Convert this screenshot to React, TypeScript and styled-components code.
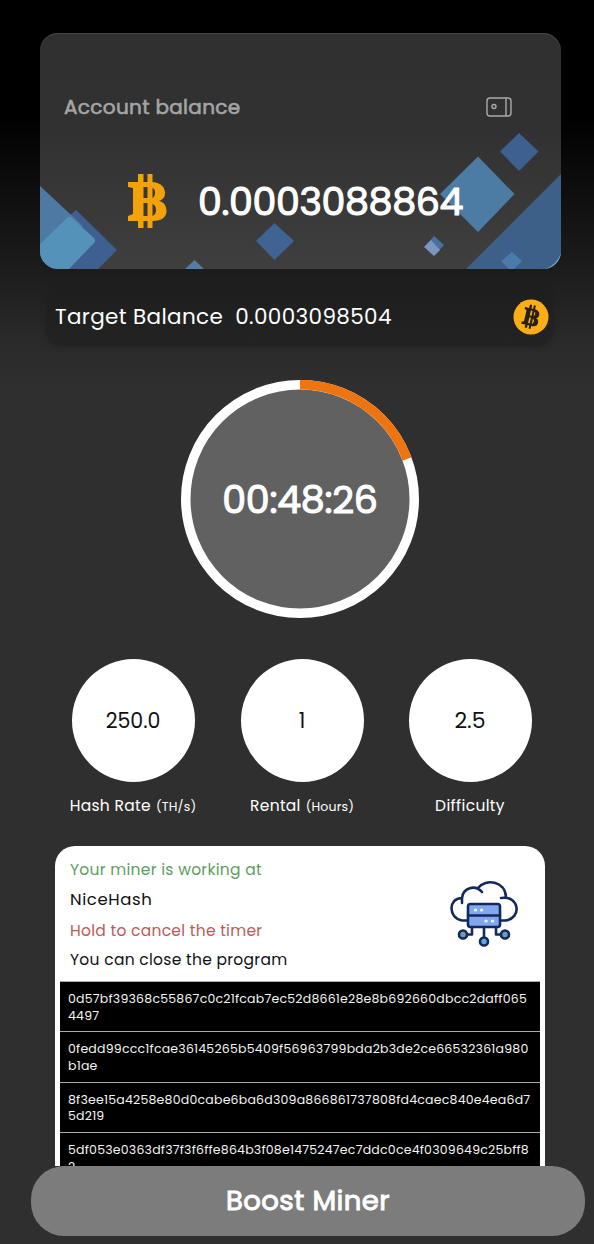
import React from 'react';
import styled, { createGlobalStyle } from 'styled-components';

const GlobalStyle = createGlobalStyle`
  * { box-sizing: border-box; }
  body {
    margin: 0;
    background: #2f2f2f;
    font-family: Poppins, Inter, sans-serif;
  }
`;

const Screen = styled.main`
  width: 594px;
  height: 1244px;
  overflow: hidden;
  display: flex;
  flex-direction: column;
  background: linear-gradient(#000 0, #000 115px, #0e0e0e 190px, #1c1c1c 270px, #292929 335px, #2f2f2f 385px);
`;

const Label = styled.span<{ $size: number; $spacing?: number; $stroke?: number; $color?: string; $shift?: number }>`
  font-size: ${p => p.$size}px;
  line-height: 1;
  letter-spacing: ${p => p.$spacing ?? 0}px;
  -webkit-text-stroke: ${p => p.$stroke ?? 0}px;
  color: ${p => p.$color ?? '#fff'};
  white-space: nowrap;
  margin-left: ${p => p.$shift ?? 0}px;
`;

const BalanceCard = styled.section`
  position: relative;
  flex: none;
  width: 521px;
  height: 236px;
  margin: 33px 0 0 40px;
  border-radius: 18px;
  overflow: hidden;
  background: linear-gradient(#303030, #313131 40%, #3f3f3f);
  box-shadow: inset 0 1px 0 #454545;
`;

const CardArt = styled.svg`
  position: absolute;
  inset: 0;
`;

const CardContent = styled.div`
  position: relative;
`;

const CardHeader = styled.div`
  display: flex;
  align-items: center;
  justify-content: space-between;
  padding: 64px 49px 0 24px;
`;

const Amount = styled.div`
  display: flex;
  align-items: center;
  gap: 31px;
  padding: 57px 0 0 88px;
  span { padding-top: 1px; }
`;

const TargetBar = styled.section`
  flex: none;
  display: flex;
  align-items: center;
  width: 507px;
  height: 59px;
  margin: 18px 0 0 46px;
  padding: 0 4px 0 8px;
  border-radius: 16px;
  background: linear-gradient(#1e1e1e, #232323);
  box-shadow: 0 0 5px #1f1f1f;
  svg { margin-left: auto; }
`;

const Dial = styled.section`
  position: relative;
  flex: none;
  width: 238px;
  height: 238px;
  margin: 34px 0 0 181px;
  padding-top: 2px;
  display: grid;
  place-items: center;
  svg { position: absolute; inset: 0; }
  span { position: relative; }
`;

const Stats = styled.section`
  flex: none;
  display: grid;
  grid-template-columns: 170px 168px 168px;
  margin: 41px 0 0 48px;
`;

const Stat = styled.div`
  display: flex;
  flex-direction: column;
  align-items: center;
`;

const Disc = styled.div`
  width: 123px;
  height: 123px;
  border-radius: 50%;
  background: #fff;
  display: grid;
  place-items: center;
  padding-top: 1px;
`;

const Caption = styled.div`
  display: flex;
  align-items: baseline;
  gap: 5px;
  height: 20px;
  margin-top: 16px;
`;

const MinerPanel = styled.section`
  flex: none;
  width: 490px;
  height: 320px;
  margin: 28px 0 0 55px;
  padding: 0 5px;
  border-radius: 20px 20px 0 0;
  background: #fff;
  overflow: hidden;
`;

const PanelTop = styled.div`
  display: flex;
  justify-content: space-between;
  height: 135px;
  padding: 9px 20px 0 10px;
  svg { margin-top: 22px; }
`;

const Messages = styled.div`
  display: flex;
  flex-direction: column;
  span { line-height: 30px; height: 30px; }
  span:nth-child(3) { padding-top: 1px; }
`;

const HashRow = styled.div`
  height: 50.4px;
  padding: 9px 8px 0;
  border-top: 1.5px solid #aaa;
  background: #000;
  color: #f4f4f4;
  font-size: 12.5px;
  line-height: 16.5px;
`;

const HashLine = styled.div`
  letter-spacing: 0.22px;
  white-space: nowrap;
`;

const BoostButton = styled.button`
  flex: none;
  width: 554px;
  height: 70px;
  margin-left: 31px;
  padding: 0;
  border: 0;
  border-radius: 33px;
  background: #7c7c7c;
  font-family: inherit;
`;

const Coin = ({ fill }: { fill: string }) => (
  <path
    fill={fill}
    fillRule="evenodd"
    d="M0 8H10V0H15.500V8H19.500V0H24.500V8C34 9 37 14 37 19C37 24 34 26 31 27C36 28 38.500 32 38.500 37C38.500 43 34 47 24.500 47V54H19.500V47H15.500V54H10V47H0V42L5 40V14L0 13ZM15.500 13V24H19.500V13ZM24.500 14V24C26.500 23 27 21 27 18.500C27 16 26.500 15 24.500 14ZM15.500 29V42H19.500V29ZM24.500 30V42C27 41 28 39 28 36C28 33 27 31 24.500 30Z"
  />
);

const hashes: [string, string][] = [
  ['0d57bf39368c55867c0c21fcab7ec52d8661e28e8b692660dbcc2daff065', '4497'],
  ['0fedd99ccc1fcae36145265b5409f56963799bda2b3de2ce66532361a980', 'b1ae'],
  ['8f3ee15a4258e80d0cabe6ba6d309a866861737808fd4caec840e4ea6d7', '5d219'],
  ['5df053e0363df37f3f6ffe864b3f08e1475247ec7ddc0ce4f0309649c25bff8', '2'],
];

export default function App() {
  return (
    <Screen>
      <GlobalStyle />
      <BalanceCard>
        <CardArt width="521" height="236" viewBox="40 33 521 236">
          <path d="M76 210L117 250L98 269H65L40 240Z" fill="#3d6090" />
          <path d="M40 186L83 226L40 266Z" fill="#4d79a3" />
          <path d="M66 219Q69 215 72 218L94 238Q96 241 94 243L69 269H40V244Z" fill="#5592ba" />
          <path d="M274.500 223L294 241L274.500 260L256 241Z" fill="#3f6392" />
          <path d="M194.500 260L204 269H185Z" fill="#547da3" />
          <path d="M519 133L538.500 151.500L519 171L500 151.500Z" fill="#3d6090" />
          <path d="M478 156.500L514.500 194L478 232L440 194Z" fill="#4c7ba4" />
          <path d="M561 174V269H466Z" fill="#3d6089" />
          <path d="M512 252L522 261L514 269H509L501 261Z" fill="#4a7cab" />
          <path d="M434 236L444 245L437 253L427 244Z" fill="#486f9f" />
          <path d="M431 240L440 250L434 256L424 247Z" fill="#7c97bd" />
          <path d="M561 253Q557 265 545 269H561Z" fill="#7fa9c2" />
        </CardArt>
        <CardContent>
          <CardHeader>
            <Label $size={20} $stroke={0.6} $spacing={0.33} $color="#a5a5a5">Account balance</Label>
            <svg width="26" height="20" viewBox="0 0 26 20" fill="none" stroke="#aaa" strokeWidth="1.400">
              <rect x="1" y="1" width="24" height="18" rx="3" />
              <path d="M20 1V19" />
              <circle cx="8" cy="9.500" r="2" />
            </svg>
          </CardHeader>
          <Amount>
            <svg width="39" height="54" viewBox="0 0 39 54"><Coin fill="#f3a20c" /></svg>
            <Label $size={38} $stroke={1.1} $spacing={-0.38}>0.0003088864</Label>
          </Amount>
        </CardContent>
      </BalanceCard>

      <TargetBar>
        <Label $size={21.5} $spacing={0.35} $shift={1}>Target Balance</Label>
        <Label $size={21.5} $spacing={0.36} $shift={12}>0.0003098504</Label>
        <svg width="36" height="36" viewBox="0 0 36 36">
          <circle cx="18" cy="18" r="17.500" fill="#fbad18" />
          <g transform="rotate(13 18 18) translate(10 6) scale(.42 .44)"><Coin fill="#2a2010" /></g>
        </svg>
      </TargetBar>

      <Dial>
        <svg width="238" height="238" viewBox="0 0 238 238" fill="none">
          <circle cx="119" cy="119" r="114.250" fill="#616161" stroke="#fff" strokeWidth="9.500" />
          <path d="M119 4.750A114.250 114.250 0 0 1 226 79" stroke="#ee7410" strokeWidth="9.500" />
        </svg>
        <Label $size={38} $stroke={1.1} $spacing={-0.3}>00:48:26</Label>
      </Dial>

      <Stats>
        <Stat>
          <Disc><Label $size={20.5} $color="#111">250.0</Label></Disc>
          <Caption>
            <Label $size={15.5} $spacing={0.3}>Hash Rate</Label>
            <Label $size={12.5} $spacing={0.2}>(TH/s)</Label>
          </Caption>
        </Stat>
        <Stat>
          <Disc><Label $size={20.5} $color="#111">1</Label></Disc>
          <Caption>
            <Label $size={15.5} $spacing={0.3}>Rental</Label>
            <Label $size={12.5} $spacing={0.15}>(Hours)</Label>
          </Caption>
        </Stat>
        <Stat>
          <Disc><Label $size={22} $color="#111">2.5</Label></Disc>
          <Caption><Label $size={15.5} $spacing={0.35}>Difficulty</Label></Caption>
        </Stat>
      </Stats>

      <MinerPanel>
        <PanelTop>
          <Messages>
            <Label $size={15.5} $spacing={0.29} $color="#5d9e60">Your miner is working at</Label>
            <Label $size={16.5} $spacing={0.6} $color="#111">NiceHash</Label>
            <Label $size={15.5} $spacing={0.28} $color="#bd5a57">Hold to cancel the timer</Label>
            <Label $size={15.5} $spacing={0.29} $color="#111">You can close the program</Label>
          </Messages>
          <svg width="72" height="72" viewBox="448 877 72 72" fill="none" stroke="#11295c" strokeWidth="2.600" strokeLinecap="round" strokeLinejoin="round">
            <path d="M467 920.500H462C448 918 448 898 462 898C463 888 475 884 482 892M478 888C486 878 505 881 506 897M501 898C520 895 522 919 505 920.500H501M462 898V903" />
            <rect x="468" y="904" width="32" height="23" rx="2.500" fill="#83a7ee" />
            <path d="M468 915.500H500M472 927V934.500H466M484 927V937M496 927V934.500H502" />
            <circle cx="463" cy="934.500" r="4" fill="#6f9fae" />
            <circle cx="505" cy="934.500" r="4" fill="#6f9fae" />
            <circle cx="484" cy="941.500" r="4" fill="#62a9dc" />
            <path d="M475.500 910H475.600M481.500 910H481.600M486 921H486.100M492.500 921H492.600" stroke="#e8f4ff" strokeWidth="3.200" />
          </svg>
        </PanelTop>
        {hashes.map(([first, rest]) => (
          <HashRow key={first}>
            <HashLine>{first}</HashLine>
            <HashLine>{rest}</HashLine>
          </HashRow>
        ))}
      </MinerPanel>

      <BoostButton>
        <Label $size={27.5} $stroke={1} $spacing={0.45}>Boost Miner</Label>
      </BoostButton>
    </Screen>
  );
}
